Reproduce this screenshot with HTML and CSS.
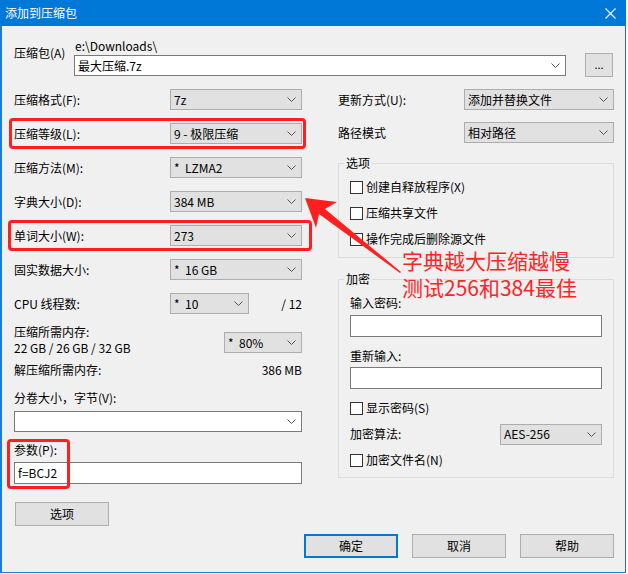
FILE: index.html
```html
<!DOCTYPE html>
<html lang="zh-CN">
<head>
<meta charset="utf-8">
<title>添加到压缩包</title>
<link rel="stylesheet" href="styles.css">
</head>
<body>
<div class="window">
  <div class="titlebar">
    <span class="title">添加到压缩包</span>
    <svg class="close" width="11" height="11" viewBox="0 0 11 11"><path d="M0.5 0.5L10.5 10.5M10.5 0.5L0.5 10.5" stroke="#fff" stroke-width="1.1" fill="none"/></svg>
  </div>
  <div class="content">
    <div class="archive-row">
      <div class="archive-label">压缩包(A)</div>
      <div class="archive-main">
        <div class="path">e:\Downloads\</div>
        <div class="combo edit"><span>最大压缩.7z</span><svg class="chev" width="9" height="5" viewBox="0 0 9 5"><path d="M0.5 0.5L4.5 4.5L8.5 0.5" fill="none" stroke="#555"/></svg></div>
      </div>
      <div class="btn browse">...</div>
    </div>

    <div class="columns">
      <div class="left">
        <div class="row"><span class="label">压缩格式(F):</span><div class="combo"><span>7z</span><svg class="chev" width="9" height="5" viewBox="0 0 9 5"><path d="M0.5 0.5L4.5 4.5L8.5 0.5" fill="none" stroke="#555"/></svg></div></div>
        <div class="row"><span class="label">压缩等级(L):</span><div class="combo"><span>9 - 极限压缩</span><svg class="chev" width="9" height="5" viewBox="0 0 9 5"><path d="M0.5 0.5L4.5 4.5L8.5 0.5" fill="none" stroke="#555"/></svg></div></div>
        <div class="row"><span class="label">压缩方法(M):</span><div class="combo"><span>*&nbsp; LZMA2</span><svg class="chev" width="9" height="5" viewBox="0 0 9 5"><path d="M0.5 0.5L4.5 4.5L8.5 0.5" fill="none" stroke="#555"/></svg></div></div>
        <div class="row"><span class="label">字典大小(D):</span><div class="combo"><span>384 MB</span><svg class="chev" width="9" height="5" viewBox="0 0 9 5"><path d="M0.5 0.5L4.5 4.5L8.5 0.5" fill="none" stroke="#555"/></svg></div></div>
        <div class="row"><span class="label">单词大小(W):</span><div class="combo"><span>273</span><svg class="chev" width="9" height="5" viewBox="0 0 9 5"><path d="M0.5 0.5L4.5 4.5L8.5 0.5" fill="none" stroke="#555"/></svg></div></div>
        <div class="row"><span class="label">固实数据大小:</span><div class="combo"><span>*&nbsp; 16 GB</span><svg class="chev" width="9" height="5" viewBox="0 0 9 5"><path d="M0.5 0.5L4.5 4.5L8.5 0.5" fill="none" stroke="#555"/></svg></div></div>
        <div class="row cpu"><span class="label">CPU 线程数:</span><div class="combo"><span>*&nbsp; 10</span><svg class="chev" width="9" height="5" viewBox="0 0 9 5"><path d="M0.5 0.5L4.5 4.5L8.5 0.5" fill="none" stroke="#555"/></svg></div><span class="total">/ 12</span></div>
        <div class="mem">
          <div class="mem-label">压缩所需内存:<br>22 GB / 26 GB / 32 GB</div>
          <div class="combo"><span>*&nbsp; 80%</span><svg class="chev" width="9" height="5" viewBox="0 0 9 5"><path d="M0.5 0.5L4.5 4.5L8.5 0.5" fill="none" stroke="#555"/></svg></div>
        </div>
        <div class="unmem"><span>解压缩所需内存:</span><span>386 MB</span></div>
        <div class="vol-label">分卷大小，字节(V):</div>
        <div class="combo edit vol"><span></span><svg class="chev" width="9" height="5" viewBox="0 0 9 5"><path d="M0.5 0.5L4.5 4.5L8.5 0.5" fill="none" stroke="#555"/></svg></div>
        <div class="param-label">参数(P):</div>
        <div class="textbox param">f=BCJ2</div>
        <div class="btn options">选项</div>
      </div>

      <div class="right">
        <div class="rrow"><span class="rlabel">更新方式(U):</span><div class="combo"><span>添加并替换文件</span><svg class="chev" width="9" height="5" viewBox="0 0 9 5"><path d="M0.5 0.5L4.5 4.5L8.5 0.5" fill="none" stroke="#555"/></svg></div></div>
        <div class="rrow"><span class="rlabel">路径模式</span><div class="combo"><span>相对路径</span><svg class="chev" width="9" height="5" viewBox="0 0 9 5"><path d="M0.5 0.5L4.5 4.5L8.5 0.5" fill="none" stroke="#555"/></svg></div></div>
        <fieldset class="group opts">
          <legend>选项</legend>
          <div class="check"><span class="box"></span><span>创建自释放程序(X)</span></div>
          <div class="check"><span class="box"></span><span>压缩共享文件</span></div>
          <div class="check"><span class="box"></span><span>操作完成后删除源文件</span></div>
        </fieldset>
        <fieldset class="group enc">
          <legend>加密</legend>
          <div class="enc-label">输入密码:</div>
          <div class="textbox pw"></div>
          <div class="enc-label second">重新输入:</div>
          <div class="textbox pw second"></div>
          <div class="check show"><span class="box"></span><span>显示密码(S)</span></div>
          <div class="algo"><span>加密算法:</span><div class="combo"><span>AES-256</span><svg class="chev" width="9" height="5" viewBox="0 0 9 5"><path d="M0.5 0.5L4.5 4.5L8.5 0.5" fill="none" stroke="#555"/></svg></div></div>
          <div class="check"><span class="box"></span><span>加密文件名(N)</span></div>
        </fieldset>
      </div>
    </div>

    <div class="footer">
      <div class="btn default">确定</div>
      <div class="btn">取消</div>
      <div class="btn">帮助</div>
    </div>
  </div>

  <div class="mark mark-level"></div>
  <div class="mark mark-word"></div>
  <div class="mark mark-param"></div>
  <svg class="arrow" width="626" height="573" viewBox="0 0 626 573">
    <polygon points="305,198 337,202 325,209 401,272 400,273 319,214 316,228" fill="#ff1f1f"/>
  </svg>
  <div class="note">字典越大压缩越慢<br>测试256和384最佳</div>
</div>
</body>
</html>
```

FILE: styles.css
```css
* { box-sizing: border-box; }

body {
  margin: 0;
  background: #ffffff;
  font-family: "Noto Sans CJK SC", "Noto Sans", sans-serif;
  font-size: 12px;
  color: #000;
}

.window {
  position: relative;
  width: 626px;
  height: 573px;
  display: flex;
  flex-direction: column;
}

.titlebar {
  height: 26px;
  flex: none;
  background: #0078d7;
  color: #fff;
  display: flex;
  align-items: center;
  justify-content: space-between;
  padding: 0 10px 0 5px;
  line-height: 16px;
}

.close { display: block; }

.content {
  flex: 1;
  background: #f0f0f0;
  border-left: 2px solid #1c7cd5;
  border-right: 1px solid #2d6ab0;
  border-bottom: 1px solid #1c7cd5;
  padding: 12px 0 0 12px;
}

/* archive row */
.archive-row {
  display: flex;
  align-items: flex-start;
  height: 39px;
}
.archive-label {
  width: 60px;
  padding-top: 7px;
  line-height: 16px;
}
.archive-main { width: 492px; }
.path {
  height: 17px;
  line-height: 16px;
  padding-left: 1px;
}

/* controls */
.combo {
  height: 21px;
  display: flex;
  align-items: center;
  justify-content: space-between;
  padding: 0 5px 0 3px;
  background: #e1e1e1;
  border: 1px solid #adadad;
  line-height: 16px;
  white-space: nowrap;
}
.combo.edit {
  background: #fff;
  border-color: #7a7a7a;
}
.chev { display: block; flex: none; }

.textbox {
  height: 22px;
  background: #fff;
  border: 1px solid #7a7a7a;
  padding: 0 3px;
  line-height: 20px;
}

.btn {
  background: #e1e1e1;
  border: 1px solid #adadad;
  display: flex;
  align-items: center;
  justify-content: center;
  line-height: 16px;
}

.browse {
  margin-left: 19px;
  margin-top: 15px;
  width: 28px;
  height: 24px;
  font-size: 11px;
  padding-bottom: 2px;
}

/* columns */
.columns {
  display: flex;
  gap: 36px;
  margin-top: 12px;
}

.left {
  width: 288px;
  display: flex;
  flex-direction: column;
}
.row {
  height: 34px;
  display: flex;
  align-items: flex-start;
}
.row .label {
  width: 156px;
  line-height: 21px;
}
.row .combo { width: 132px; }
.cpu .combo { width: 79px; }
.cpu .total {
  margin-left: auto;
  line-height: 21px;
}

.mem {
  margin-top: -3px;
  height: 32px;
  display: flex;
  align-items: flex-start;
}
.mem-label {
  width: 210px;
  line-height: 16px;
}
.mem .combo {
  width: 78px;
  margin-top: 8px;
}

.unmem {
  margin-top: 6px;
  display: flex;
  justify-content: space-between;
  line-height: 16px;
}

.vol-label {
  margin-top: 12px;
  line-height: 16px;
}
.vol { margin-top: 5px; }

.param-label {
  margin-top: 10px;
  line-height: 16px;
}
.param { margin-top: 4px; }

.options {
  margin-top: 18px;
  margin-left: 1px;
  width: 94px;
  height: 24px;
}

/* right column */
.right {
  width: 276px;
  display: flex;
  flex-direction: column;
}
.rrow {
  height: 33px;
  display: flex;
  align-items: flex-start;
}
.rlabel {
  width: 126px;
  line-height: 21px;
}
.rrow .combo { width: 150px; }

.group {
  margin: 0;
  min-width: 0;
  border: 1px solid #dcdcdc;
  padding: 3px 11px 5px 11px;
}
.group legend {
  padding: 0 2px;
  margin-left: -6px;
  line-height: 16px;
}
.enc {
  margin-top: 13px;
  padding-top: 8px;
  padding-bottom: 4px;
}

.check {
  height: 26px;
  display: flex;
  align-items: center;
  gap: 3px;
  line-height: 16px;
}
.box {
  width: 13px;
  height: 13px;
  flex: none;
  background: #fff;
  border: 1px solid #333;
}

.enc-label { line-height: 16px; }
.enc-label.second { margin-top: 11px; }
.pw { margin-top: 4px; width: 252px; }
.pw.second { margin-top: 3px; }
.check.show { margin-top: 6px; }

.algo {
  height: 26px;
  display: flex;
  align-items: center;
  justify-content: space-between;
  line-height: 16px;
}
.algo .combo { width: 102px; }

/* footer */
.footer {
  display: flex;
  justify-content: flex-end;
  gap: 14px;
  padding-right: 11px;
  margin-top: 8px;
}
.footer .btn {
  width: 94px;
  height: 24px;
}
.footer .btn.default {
  border: 2px solid #0078d7;
}

/* annotations laid over the dialog */
.mark {
  position: absolute;
  border: 3px solid #ff1f1f;
  border-radius: 4px;
}
.mark-level { left: 9px; top: 118px; width: 297px; height: 31px; }
.mark-word { left: 8px; top: 220px; width: 304px; height: 31px; }
.mark-param { left: 7px; top: 439px; width: 63px; height: 50px; }

.arrow {
  position: absolute;
  left: 0;
  top: 0;
}

.note {
  position: absolute;
  left: 402px;
  top: 247px;
  font-size: 21px;
  line-height: 27px;
  color: #ff2424;
  white-space: nowrap;
}
```
